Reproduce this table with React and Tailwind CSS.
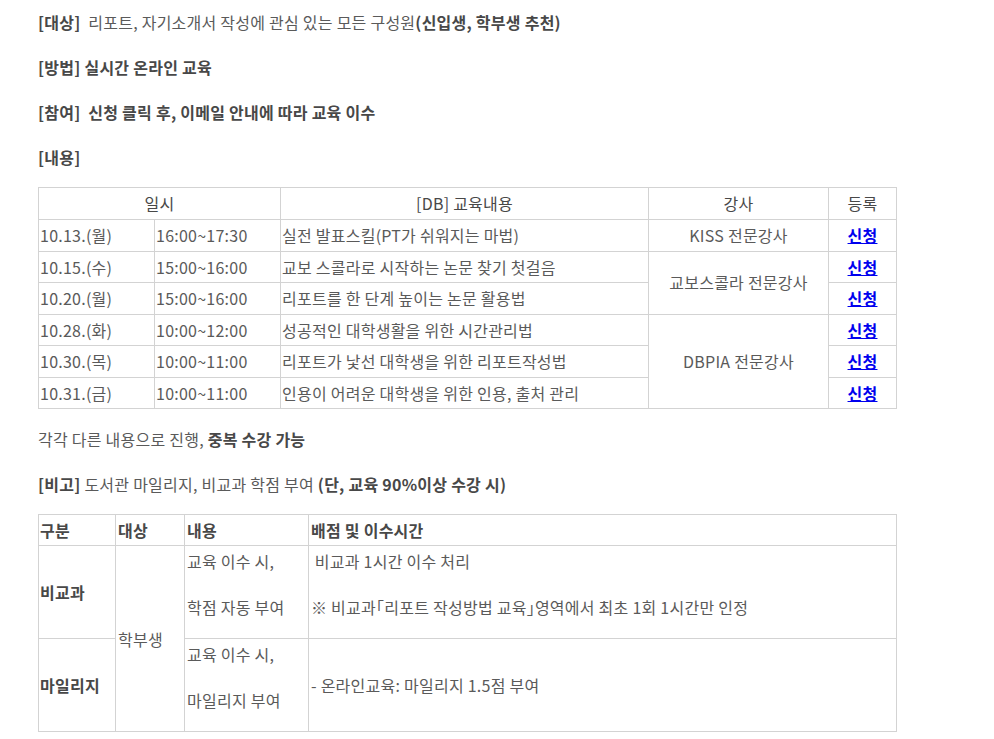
const rows = [
  { date: "10.13.(월)", time: "16:00~17:30", title: "실전 발표스킬(PT가 쉬워지는 마법)", teacher: "KISS 전문강사", span: 1 },
  { date: "10.15.(수)", time: "15:00~16:00", title: "교보 스콜라로 시작하는 논문 찾기 첫걸음", teacher: "교보스콜라 전문강사", span: 2 },
  { date: "10.20.(월)", time: "15:00~16:00", title: "리포트를 한 단계 높이는 논문 활용법" },
  { date: "10.28.(화)", time: "10:00~12:00", title: "성공적인 대학생활을 위한 시간관리법", teacher: "DBPIA 전문강사", span: 3 },
  { date: "10.30.(목)", time: "10:00~11:00", title: "리포트가 낯선 대학생을 위한 리포트작성법" },
  { date: "10.31.(금)", time: "10:00~11:00", title: "인용이 어려운 대학생을 위한 인용, 출처 관리" },
]

const cell = "border border-[#d3d3d3] px-[1px] leading-[30.5px]"
const cell2 = "border border-[#d3d3d3] px-[2px]"

export default function App() {
  return (
    <div
      className="min-h-screen bg-white px-[38px] pt-[7px] text-[16px] tracking-[0.25px] text-[#5a5a5a]"
      style={{ fontFamily: '"Noto Sans CJK KR", "Noto Sans", sans-serif' }}
    >
      <p className="mb-[15px] leading-[30px]">
        <b className="text-[#484848]">[대상]</b>&nbsp; 리포트, 자기소개서 작성에 관심 있는 모든 구성원
        <b className="text-[#484848]">(신입생, 학부생 추천)</b>
      </p>
      <p className="mb-[15px] leading-[30px] font-bold text-[#484848]">[방법] 실시간 온라인 교육</p>
      <p className="mb-[15px] leading-[30px] font-bold text-[#484848]">[참여]&nbsp; 신청 클릭 후, 이메일 안내에 따라 교육 이수</p>
      <p className="mb-[15px] leading-[30px] font-bold text-[#484848]">[내용]</p>

      <table className="mb-[15px] w-[858px] table-fixed border-collapse">
        <colgroup>
          <col className="w-[116px]" />
          <col className="w-[126px]" />
          <col className="w-[368px]" />
          <col className="w-[180px]" />
          <col className="w-[68px]" />
        </colgroup>
        <thead>
          <tr className="text-[#484848]">
            <th colSpan={2} className="border border-[#d3d3d3] font-normal leading-[31px]">일시</th>
            <th className="border border-[#d3d3d3] font-normal leading-[31px]">[DB] 교육내용</th>
            <th className="border border-[#d3d3d3] font-normal leading-[31px]">강사</th>
            <th className="border border-[#d3d3d3] font-normal leading-[31px]">등록</th>
          </tr>
        </thead>
        <tbody>
          {rows.map((r) => (
            <tr key={r.date}>
              <td className={cell}>{r.date}</td>
              <td className={cell}>{r.time}</td>
              <td className={cell}>{r.title}</td>
              {r.span && (
                <td rowSpan={r.span} className={`${cell} text-center align-middle`}>
                  {r.teacher}
                </td>
              )}
              <td className={`${cell} text-center`}>
                <a href="#" className="font-bold text-[#0000ee] underline">신청</a>
              </td>
            </tr>
          ))}
        </tbody>
      </table>

      <p className="mb-[15px] leading-[30px]">
        각각 다른 내용으로 진행, <b className="text-[#484848]">중복 수강 가능</b>
      </p>
      <p className="mb-[15px] leading-[30px]">
        <b className="text-[#484848]">[비고]</b> 도서관 마일리지, 비교과 학점 부여 <b className="text-[#484848]">(단, 교육 90%이상 수강 시)</b>
      </p>

      <table className="w-[858px] table-fixed border-collapse">
        <colgroup>
          <col className="w-[77px]" />
          <col className="w-[69px]" />
          <col className="w-[124px]" />
          <col className="w-[588px]" />
        </colgroup>
        <thead>
          <tr className="text-left font-bold text-[#484848]">
            <th className="border border-[#d3d3d3] px-[1px] leading-[30px]">구분</th>
            <th className="border border-[#d3d3d3] px-[2px] leading-[30px]">대상</th>
            <th className="border border-[#d3d3d3] px-[2px] leading-[30px]">내용</th>
            <th className="border border-[#d3d3d3] px-[2px] leading-[30px]">배점 및 이수시간</th>
          </tr>
        </thead>
        <tbody>
          <tr>
            <td className="border border-[#d3d3d3] px-[1px] align-middle font-bold text-[#484848]">비교과</td>
            <td rowSpan={2} className={`${cell2} align-middle`}>학부생</td>
            <td className={`${cell2} align-top`}>
              <p className="mb-[15px] leading-[31px]">교육 이수 시,</p>
              <p className="mb-[15px] leading-[31px]">학점 자동 부여</p>
            </td>
            <td className={`${cell2} align-top`}>
              <p className="mb-[15px] leading-[31px]">&nbsp;비교과 1시간 이수 처리</p>
              <p className="mb-[15px] leading-[31px]">※ 비교과｢리포트 작성방법 교육｣영역에서 최초 1회 1시간만 인정</p>
            </td>
          </tr>
          <tr>
            <td className="border border-[#d3d3d3] px-[1px] align-middle font-bold text-[#484848]">마일리지</td>
            <td className={`${cell2} align-top`}>
              <p className="mb-[15px] leading-[31px]">교육 이수 시,</p>
              <p className="mb-[15px] leading-[31px]">마일리지 부여</p>
            </td>
            <td className={`${cell2} align-middle`}>- 온라인교육: 마일리지 1.5점 부여</td>
          </tr>
        </tbody>
      </table>
    </div>
  )
}
